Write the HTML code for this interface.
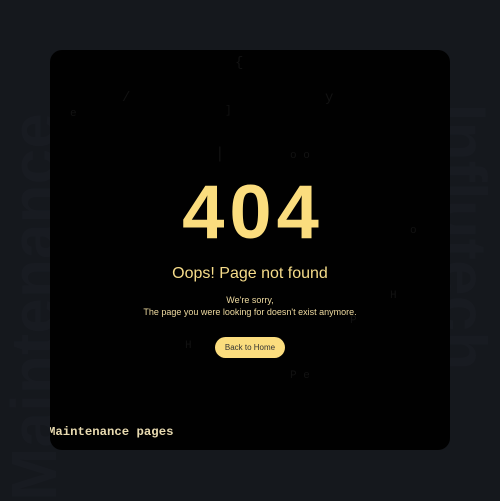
<!DOCTYPE html>
<html><head><meta charset="utf-8"><style>
html,body{margin:0;padding:0;}
body{width:500px;height:500px;background:#15181d;position:relative;overflow:hidden;font-family:"Liberation Sans",sans-serif;}
.side{position:absolute;font-weight:bold;font-size:64px;color:#181b21;white-space:nowrap;}
.l{left:-160px;top:270px;transform:rotate(-90deg);}
.r{left:330px;top:200px;transform:rotate(90deg);}
.card{position:absolute;left:50px;top:50px;width:400px;height:400px;background:#010101;border-radius:12px;overflow:hidden;}
.bg{position:absolute;color:#121212;font-size:11px;font-family:"Liberation Mono",monospace;}
.t404{position:absolute;left:3px;width:400px;top:119px;text-align:center;font-size:76px;font-weight:bold;color:#fbdd7e;letter-spacing:5px;}
.oops{position:absolute;left:0;width:400px;top:215px;text-align:center;font-size:16px;color:#f6dc8a;}
.p{position:absolute;left:0;width:400px;text-align:center;font-size:9px;color:#eedaa0;}
.btn{position:absolute;left:165px;top:287px;width:70px;height:21px;border-radius:11px;background:#fbdd7e;color:#333;font-size:8px;text-align:center;line-height:21px;}
.mt{position:absolute;left:-2px;top:375px;font-family:"Liberation Mono",serif;font-size:12.3px;color:#e8dab0;font-weight:bold;}
</style></head><body>
<div class="side l">Maintenance</div>
<div class="side r">Influtech</div>
<div class="card">
<span class="bg" style="left:185px;top:5px;font-size:14px">{</span>
<span class="bg" style="left:72px;top:40px;font-size:14px">/</span>
<span class="bg" style="left:275px;top:40px;font-size:14px">y</span>
<span class="bg" style="left:175px;top:55px">]</span>
<span class="bg" style="left:20px;top:58px">e</span>
<span class="bg" style="left:165px;top:95px;font-size:16px">|</span>
<span class="bg" style="left:240px;top:100px">o o</span>
<span class="bg" style="left:360px;top:175px">o</span>
<span class="bg" style="left:340px;top:240px">H</span>
<span class="bg" style="left:300px;top:265px">P</span>
<span class="bg" style="left:135px;top:290px">H</span>
<span class="bg" style="left:240px;top:320px">P e</span>
</div>
<div class="card" style="background:transparent">
<div class="t404">404</div>
<div class="oops">Oops! Page not found</div>
<div class="p" style="top:245px">We're sorry,</div>
<div class="p" style="top:257px">The page you were looking for doesn't exist anymore.</div>
<div class="btn">Back to Home</div>
<div class="mt">Maintenance pages</div>
</div>
</body></html>
